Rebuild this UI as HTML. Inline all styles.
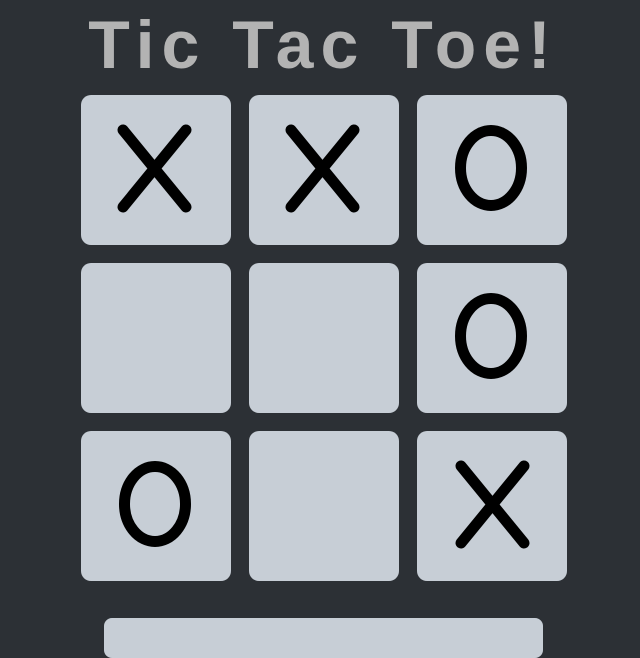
<!DOCTYPE html>
<html><head><style>
html,body{margin:0;padding:0;width:640px;height:640px;background:#2c3035;overflow:hidden}
.t{position:absolute;left:3px;width:640px;top:5px;text-align:center;font:bold 68px "Liberation Sans",sans-serif;color:#b3b3b3;letter-spacing:7px;line-height:80px}
.c{position:absolute;width:150px;height:150px;background:#c7ced6;border-radius:10px}
.b{position:absolute;left:104px;top:618px;width:439px;height:40px;background:#c7ced6;border-radius:8px}
svg{position:absolute;left:0;top:0}
</style></head><body>
<div class="t">Tic Tac Toe!</div>
<div class="c" style="left:81px;top:95px"></div>
<div class="c" style="left:249px;top:95px"></div>
<div class="c" style="left:417px;top:95px"></div>
<div class="c" style="left:81px;top:263px"></div>
<div class="c" style="left:249px;top:263px"></div>
<div class="c" style="left:417px;top:263px"></div>
<div class="c" style="left:81px;top:431px"></div>
<div class="c" style="left:249px;top:431px"></div>
<div class="c" style="left:417px;top:431px"></div>
<div class="b"></div>
<svg width="640" height="640" stroke="#000" stroke-width="11" stroke-linecap="round" fill="none">
<path d="M123 130L186 207M186 130L123 207"/>
<path d="M291 130L354 207M354 130L291 207"/>
<path d="M461 466L524 543M524 466L461 543"/>
<ellipse cx="491" cy="168" rx="30.5" ry="37.5"/>
<ellipse cx="491" cy="336" rx="30.5" ry="37.5"/>
<ellipse cx="155" cy="504" rx="30.5" ry="37.5"/>
</svg>
</body></html>
